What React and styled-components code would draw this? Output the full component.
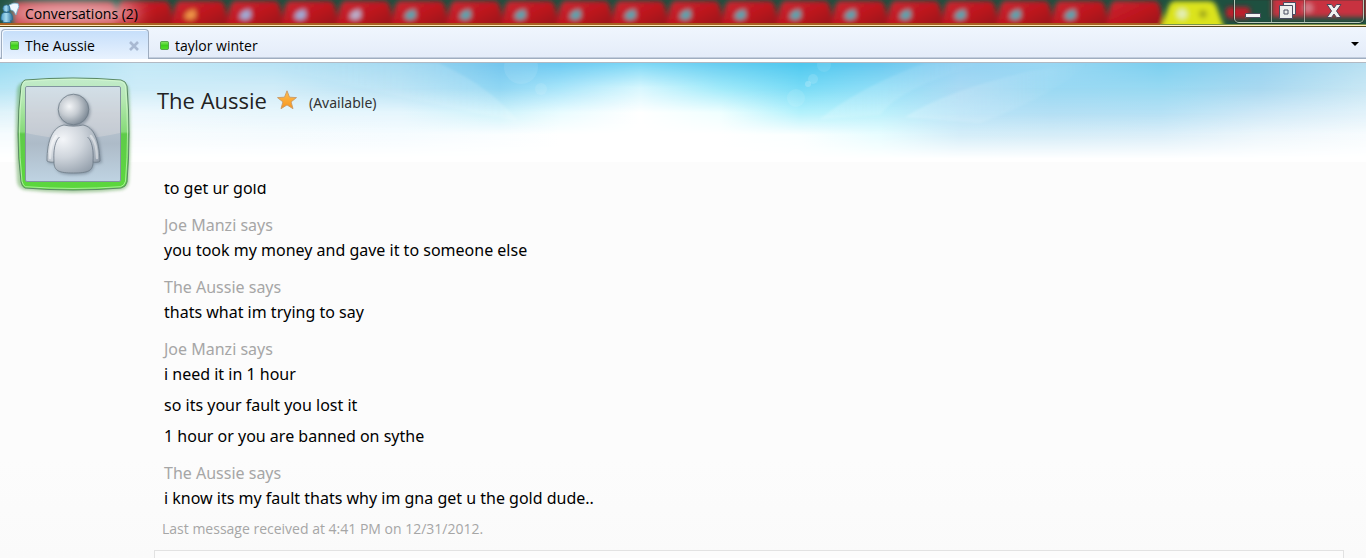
import { useState } from 'react';
import styled, { createGlobalStyle } from 'styled-components';

const tabs = ['The Aussie', 'taylor winter'];

const conversation = [
	{ messages: ['to get ur gold'] },
	{ author: 'Joe Manzi', messages: ['you took my money and gave it to someone else'] },
	{ author: 'The Aussie', messages: ['thats what im trying to say'] },
	{
		author: 'Joe Manzi',
		messages: ['i need it in 1 hour', 'so its your fault you lost it', '1 hour or you are banned on sythe'],
	},
	{ author: 'The Aussie', messages: ['i know its my fault thats why im gna get u the gold dude..'] },
];

export default function App() {
	const [active, setActive] = useState(tabs[0]);

	return (
		<Window>
			<GlobalStyle />
			<TitleBar>
				<GlassBackdrop />
				<MessengerIcon />
				<Title>Conversations (2)</Title>
				<WindowButtons>
					<WindowButton aria-label="Minimize" $width={36}>
						<MinimizeIcon />
					</WindowButton>
					<WindowButton aria-label="Restore" $width={33}>
						<RestoreIcon />
					</WindowButton>
					<WindowButton aria-label="Close" $width={59}>
						<CloseIcon />
					</WindowButton>
				</WindowButtons>
			</TitleBar>
			<TabStrip>
				{tabs.map((name) => (
					<Tab key={name} $active={name === active}>
						<TabButton onClick={() => setActive(name)}>
							<StatusDot />
							{name}
						</TabButton>
						{name === active && (
							<TabClose aria-label={`Close ${name}`}>
								<svg width="12" height="12" viewBox="0 0 12 12">
									<path d="M2 2l8 8M10 2l-8 8" stroke="#a9b9d2" strokeWidth="2.6" />
								</svg>
							</TabClose>
						)}
					</Tab>
				))}
				<TabMenu aria-label="More tabs">
					<svg width="8" height="4" viewBox="0 0 8 4">
						<path d="M0 0h8L4 4z" fill="#000" />
					</svg>
				</TabMenu>
			</TabStrip>
			<Conversation>
				<Sky />
				<Avatar />
				<Main>
					<Contact>
						<ContactName>The Aussie</ContactName>
						<StarIcon />
						<ContactStatus>(Available)</ContactStatus>
					</Contact>
					<Log>
						{conversation.map(({ author, messages }) => (
							<Group key={messages[0]}>
								{author && <Author>{author} says</Author>}
								{messages.map((text) => (
									<Message key={text}>{text}</Message>
								))}
							</Group>
						))}
					</Log>
					<LastReceived>Last message received at 4:41 PM on 12/31/2012.</LastReceived>
					<Composer aria-label="Message" />
				</Main>
			</Conversation>
		</Window>
	);
}

// blurred browser tabs showing through the glass title bar
function GlassBackdrop() {
	const reds = Array.from({ length: 18 }, (_, i) => 173 + i * 55);

	return (
		<Backdrop aria-hidden="true">
			<defs>
				<filter id="soft" x="-20%" y="-50%" width="140%" height="200%">
					<feGaussianBlur stdDeviation="2.4" />
				</filter>
				<filter id="softer" x="-20%" y="-100%" width="140%" height="300%">
					<feGaussianBlur stdDeviation="8" />
				</filter>
				<linearGradient id="red" x2="1" y2="1">
					<stop offset="0" stopColor="#cc2a34" />
					<stop offset="0.5" stopColor="#bd141e" />
					<stop offset="1" stopColor="#8c161c" />
				</linearGradient>
			</defs>
			<rect width="100%" height="26" fill="#1e5040" />
			<g filter="url(#soft)">
				<path d="M14 30V8q0-6 6-6H108q6 0 8 7l4 21z" fill="#c8303a" />
				<path d="M114 30l4-22q2-7 6-7h40q5 0 7 7l4 22z" fill="url(#red)" />
				{reds.map((x) => (
					<path key={x} d={`M${x - 2} 30l3-20q2-9 7-9h38q5 0 7 9l4 20z`} fill="url(#red)" />
				))}
				{reds.slice(0, 17).map((x, i) => (
					<path
						key={x}
						d={`M${x + 11} 18l3-6 8-3 1 8-5 3z`}
						fill={['#f09848', '#9db0dc', '#9db0dc', '#b9b3d0'][i] || '#4fa8b4'}
					/>
				))}
				<path d="M1160 30l8-22q2-7 7-7h34q6 0 8 7l8 22z" fill="#dbe31c" />
				<circle cx="1182" cy="14" r="5" fill="#e4efb8" />
				<circle cx="1203" cy="14" r="4" fill="#a3a91c" />
				<rect x="1226" y="7" width="24" height="11" rx="4" fill="#c01f2c" />
				<rect x="1272" y="-4" width="94" height="21" fill="#c8323f" />
				<circle cx="1308" cy="8" r="5" fill="#d27c88" />
			</g>
			<ellipse cx="74" cy="13" rx="68" ry="10" fill="#fff" opacity="0.65" filter="url(#softer)" />
			<rect width="1160" y="23" height="2" fill="#a96122" />
			<rect x="1160" width="100%" y="24" height="1" fill="#78954a" />
		</Backdrop>
	);
}

function MessengerIcon() {
	return (
		<svg width="20" height="24" viewBox="0 0 20 24" aria-hidden="true">
			<defs>
				<linearGradient id="buddy" x2="1" y2="0">
					<stop offset="0" stopColor="#4f9cc6" />
					<stop offset="0.45" stopColor="#a5dbef" />
					<stop offset="1" stopColor="#2b6f9c" />
				</linearGradient>
			</defs>
			<path
				d="M9 5q5-3 9-1.500 2 3-.5 6.500l-1.500 5-2.500-4q-3.500-1-4.500-3z"
				fill="#eef9ff"
				stroke="#74aeca"
				strokeWidth="0.8"
			/>
			<circle cx="6.5" cy="8.5" r="3.600" fill="url(#buddy)" stroke="#2c6d94" strokeWidth="0.7" />
			<path
				d="M1 20q-.5-6.500 3-7.500h5q4 1 3.500 7.500l-2 .5v2H3v-2z"
				fill="url(#buddy)"
				stroke="#2c6d94"
				strokeWidth="0.8"
			/>
		</svg>
	);
}

function MinimizeIcon() {
	return (
		<svg width="18" height="20" viewBox="0 0 18 20">
			<rect x="1.5" y="12.5" width="15" height="4" rx="0.5" fill="#f2f2f2" stroke="#4a4c5c" />
		</svg>
	);
}

function RestoreIcon() {
	return (
		<svg width="18" height="18" viewBox="0 0 18 18">
			<g fillRule="evenodd" stroke="#4a4c60">
				<path d="M4.500 .5h12v12h-12z" fill="#eee" />
				<path d="M.5 3.500h13v13H.5zM5 8v4h4V8z" fill="#eee" />
			</g>
		</svg>
	);
}

function CloseIcon() {
	return (
		<svg width="16" height="16" viewBox="0 0 16 16">
			<path
				d="M1 1.500h4.500L8 5l2.500-3.500H15L10.500 8l4.500 6.500h-4.500L8 11l-2.500 3.500H1L5.500 8z"
				fill="#f0f0f0"
				stroke="#4c4658"
			/>
		</svg>
	);
}

function StatusDot() {
	return (
		<svg width="9" height="9" viewBox="0 0 10 10" aria-hidden="true">
			<defs>
				<linearGradient id="dot" x2="0" y2="1">
					<stop offset="0" stopColor="#8be868" />
					<stop offset="0.5" stopColor="#3ccf1c" />
					<stop offset="1" stopColor="#55e02c" />
				</linearGradient>
			</defs>
			<rect x="0.5" y="0.5" width="9" height="9" rx="1.5" fill="url(#dot)" stroke="#4b9a42" />
		</svg>
	);
}

function StarIcon() {
	return (
		<svg width="22" height="22" viewBox="0 0 22 22" aria-hidden="true">
			<defs>
				<linearGradient id="star" x2="0" y2="1">
					<stop offset="0" stopColor="#ffc04f" />
					<stop offset="1" stopColor="#f7941e" />
				</linearGradient>
			</defs>
			<path
				d="M10 1.800l2.500 6.400 7 .4-5.400 4.300 1.900 6.800L10 15.900l-6 3.800 1.900-6.800L.5 8.600l7-.4z"
				fill="url(#star)"
				stroke="#c89a68"
				strokeWidth="0.9"
				strokeLinejoin="round"
			/>
		</svg>
	);
}

function Avatar() {
	return (
		<AvatarSvg width="126" height="128" viewBox="0 0 126 128" role="img" aria-label="The Aussie">
			<defs>
				<linearGradient id="frame" x2="0" y2="1">
					<stop offset="0" stopColor="#c3ebcc" />
					<stop offset="0.2" stopColor="#b4e8b0" />
					<stop offset="0.48" stopColor="#86da78" />
					<stop offset="0.5" stopColor="#5fcb4a" />
					<stop offset="1" stopColor="#5bd83c" />
				</linearGradient>
				<linearGradient id="pane" x2="0" y2="1">
					<stop offset="0" stopColor="#c8deea" />
					<stop offset="0.3" stopColor="#bfcad4" />
					<stop offset="0.6" stopColor="#adbbc8" />
					<stop offset="1" stopColor="#bfd3e2" />
				</linearGradient>
				<radialGradient id="head" cx="0.36" cy="0.4" r="0.7">
					<stop offset="0" stopColor="#f3f5f7" />
					<stop offset="0.45" stopColor="#c6ccd2" />
					<stop offset="1" stopColor="#75828f" />
				</radialGradient>
				<radialGradient id="body" cx="0.3" cy="0.3" r="0.85">
					<stop offset="0" stopColor="#f4f6f9" />
					<stop offset="0.45" stopColor="#cfd5dc" />
					<stop offset="1" stopColor="#8d99a6" />
				</radialGradient>
				<filter id="shade" x="-20%" y="-20%" width="140%" height="140%">
					<feGaussianBlur stdDeviation="1.8" />
				</filter>
			</defs>
			<path
				d="M14 12q49-6 98 0 6 1 7 8 3 43 0 92-1 6-7 8-49 6-98 0-6-2-7-8-3-49 0-92 1-7 7-8z"
				fill="#4e9a40"
				opacity="0.45"
				filter="url(#shade)"
			/>
			<path
				d="M15 10q48-4 96 0 5 1 6 6 4 48 0 96-1 5-6 6-48 4-96 0-3-1-4-6-6-48 0-96 1-5 4-6z"
				fill="url(#frame)"
				stroke="#5b8a66"
			/>
			<path
				d="M15.500 11.200q48-4 95 0 4 1 5 5 4 48 0 95-1 4.500-5 5.500-47.500 3.500-95 0-2.500-1-3.500-5.500-5-47 0-95 1-4 3.500-5z"
				fill="none"
				stroke="#dcffd2"
				opacity="0.6"
			/>
			<rect x="15.500" y="16.500" width="95" height="95" rx="1.500" fill="url(#pane)" stroke="#8295a0" />
			<path d="M16 17h94v46q-47 11-94 0z" fill="#e8e4e4" opacity="0.32" />
			<g fill="#5d6c7c" opacity="0.5" filter="url(#shade)">
				<circle cx="64.500" cy="41" r="16" />
				<path d="M54 56c-12 2-17 16-16 37l7 1c1 9 6 11 20 11s19-3 19-11l8-1c-1-21-5-35-17-37z" />
			</g>
			<path
				d="M54 55c-11 2-17 15-17 36 1 1 5 1.500 7 1 0 9 5 11 19.500 11S83 101 83 92c2 .5 6 .5 7-1-1-21-6-34-17-36-6 1.500-13 1.500-19 0z"
				fill="url(#body)"
				stroke="#6f7c88"
				strokeWidth="0.8"
			/>
			<path
				d="M44 92c-.5-9 0-15 2.500-21 1-2 2-3 3-4M83 92c.5-9 0-15-2.500-21-1-2-2-3-3-4"
				fill="none"
				stroke="#6a7785"
				opacity="0.8"
			/>
			<path
				d="M40 88c0-9 2-17 6-22M87 88c0-9-2-17-6-22"
				fill="none"
				stroke="#fff"
				strokeWidth="2.400"
				strokeLinecap="round"
				opacity="0.45"
			/>
			<circle cx="63.500" cy="39.500" r="15.300" fill="url(#head)" stroke="#6f7c88" strokeWidth="0.8" />
		</AvatarSvg>
	);
}

// sky colours at a few heights, each blended into the next one down
const skyStops = [0, 137, 273, 400, 500, 560, 640, 720, 800, 880, 960, 1050, 1160, 1260, 1366];
const skyRows = [
	{
		y: 0,
		colors: '9adcf2 c5e9f7 b8e3f5 9fd8f1 74c6ee 6ccaf2 7dd8f6 66cdf1 4ec8ef 68c8ef 93d2f3 9ad8f4 7ccfef 97d3f0 b8e0f2',
	},
	{
		y: 25,
		colors: 'b5e5f5 cdecf8 d0ecf8 b5e1f4 8fd6f3 a8e5fa d8f7fe a0eafa 78dbf6 90def7 a9daf3 9ad9f3 97d9f2 a8d8f0 c8e7f4',
	},
	{
		y: 50,
		colors: 'e0f3fa eef8fd e8f6fc e6f6fd d0f3fb eafcff ffffff f0ffff b5f2fc bdf1fb b8e3f7 b3dff4 b6e1f5 cfe9f7 e2f2fa',
	},
	{
		y: 72,
		colors: 'f6fcfe f8fcfe f5fbfe f6fcff fbfeff ffffff ffffff ffffff fbffff e8fdff d5eef9 d6edf8 dceff9 eef7fc f8fcfe',
	},
	{
		y: 96,
		colors: 'ffffff ffffff ffffff ffffff ffffff ffffff ffffff ffffff ffffff ffffff ffffff ffffff ffffff ffffff ffffff',
	},
];

function Sky() {
	return (
		<SkySvg viewBox="0 0 1366 99" preserveAspectRatio="none" aria-hidden="true">
			<defs>
				{skyRows.map(({ y, colors }, i) => (
					<linearGradient key={y} id={`sky${i}`}>
						{colors.split(' ').map((color, n) => (
							<stop key={skyStops[n]} offset={skyStops[n] / 1366} stopColor={`#${color}`} />
						))}
					</linearGradient>
				))}
				{skyRows.slice(1).map(({ y }, i) => (
					<linearGradient key={y} id={`rise${i + 1}`} gradientUnits="userSpaceOnUse" x1="0" x2="0" y1={skyRows[i].y} y2={y}>
						<stop offset="0" stopColor="#fff" stopOpacity="0" />
						<stop offset="1" stopColor="#fff" />
					</linearGradient>
				))}
				{skyRows.slice(1).map(({ y }, i) => (
					<mask key={y} id={`blend${i + 1}`} maskUnits="userSpaceOnUse" x="0" y="0" width="1366" height="99">
						<rect width="1366" height="99" fill={`url(#rise${i + 1})`} />
					</mask>
				))}
				<filter id="haze" x="-10%" y="-10%" width="120%" height="120%">
					<feGaussianBlur stdDeviation="1" />
				</filter>
				<linearGradient id="ray" x2="1" y2="0">
					<stop offset="0" stopColor="#fff" stopOpacity="0.2" />
					<stop offset="1" stopColor="#fff" stopOpacity="0" />
				</linearGradient>
				<linearGradient id="rayLeft">
					<stop offset="0" stopColor="#fff" stopOpacity="0" />
					<stop offset="1" stopColor="#fff" stopOpacity="0.16" />
				</linearGradient>
			</defs>
			{skyRows.map(({ y }, i) => (
				<rect key={y} width="1366" height="99" fill={`url(#sky${i})`} mask={i ? `url(#blend${i})` : undefined} />
			))}
			<g filter="url(#haze)">
				<path d="M438 0q50 22 80 58Q420 40 260 0z" fill="url(#rayLeft)" />
				<path d="M905 54Q945 28 1030 8l60-8q-40 34-110 60z" fill="url(#ray)" />
				<path d="M820 56Q860 24 925 0h60Q900 24 880 52z" fill="url(#ray)" />
			</g>
			<g fill="#fff">
				<circle cx="521" cy="4" r="17" opacity="0.09" />
				<circle cx="541" cy="26" r="6" opacity="0.1" />
				<circle cx="796" cy="35" r="9" opacity="0.1" />
				<circle cx="813" cy="16" r="5" opacity="0.13" />
				<circle cx="808" cy="21" r="3" opacity="0.2" />
				<circle cx="824" cy="2" r="7" opacity="0.09" />
			</g>
		</SkySvg>
	);
}

const GlobalStyle = createGlobalStyle`
	body {
		margin: 0;
		background: #fcfcfc;
		color: #000;
		font-family: 'Open Sans', 'Noto Sans', sans-serif;
		font-size: 14px;
	}
	* {
		box-sizing: border-box;
	}
	button {
		border: 0;
		padding: 0;
		background: none;
		color: inherit;
		font: inherit;
	}
	svg {
		display: block;
		flex: none;
	}
`;

const Window = styled.div`
	display: flex;
	flex-direction: column;
	height: 100vh;
	overflow: hidden;
`;

const TitleBar = styled.header`
	position: relative;
	display: flex;
	align-items: center;
	gap: 5px;
	flex: none;
	height: 27px;
	padding-bottom: 2px;
	border-bottom: 1px solid #564618;
	background: #ffe9b8;
	overflow: hidden;

	& > * {
		position: relative;
	}
`;

const Backdrop = styled.svg`
	&& {
		position: absolute;
	}
	top: 0;
	left: 0;
	width: 100%;
	height: 25px;
`;

const Title = styled.h1`
	margin: 0;
	padding-top: 4px;
	font-size: 14px;
	font-weight: 400;
	line-height: 20px;
`;

const WindowButtons = styled.div`
	display: flex;
	align-self: flex-start;
	height: 23px;
	margin-left: auto;
	margin-right: 2px;
	border: 1px solid #b9cabb;
	border-top: 0;
	border-radius: 0 0 5px 5px;
	box-shadow: 0 0 0 1px rgba(30, 45, 35, 0.55);
`;

const WindowButton = styled.button`
	display: flex;
	align-items: center;
	justify-content: center;
	width: ${({ $width }) => $width}px;
	box-shadow: inset 0 0 0 1px rgba(40, 50, 45, 0.25);

	& + & {
		border-left: 1px solid rgba(215, 220, 210, 0.6);
	}
`;

const TabStrip = styled.nav`
	display: flex;
	align-items: flex-end;
	gap: 2px;
	flex: none;
	height: 36px;
	padding: 2px 7px 3px 1px;
	border-bottom: 1px solid #b3b9c2;
	background: linear-gradient(#f0f6fe, #e4ecf9 30px, #9fadc0 31px, #9fadc0 32px, #fff 32px);
`;

const Tab = styled.div`
	display: flex;
	align-items: center;
	justify-content: space-between;
	min-width: 148px;
	height: 30px;
	padding: 2px 8px 0;
	border: 1px solid transparent;
	border-bottom: 0;
	border-radius: 4px 4px 0 0;
	${({ $active }) =>
		$active && 'border-color: #9fadc0; background: linear-gradient(#c5defa, #e8f2fe); box-shadow: inset 1px 1px #f3f9ff;'}
`;

const TabButton = styled.button`
	display: flex;
	align-items: center;
	gap: 6px;
	line-height: 20px;
`;

const TabClose = styled.button`
	display: flex;
`;

const TabMenu = styled.button`
	align-self: center;
	margin-left: auto;
`;

const Conversation = styled.main`
	position: relative;
	display: flex;
	flex: 1;
	min-height: 0;
	gap: 18px;
	padding: 0 22px 0 10px;
	background: linear-gradient(#fcfcfc 80%, #fafafa);
`;

const SkySvg = styled.svg`
	position: absolute;
	top: 0;
	left: 0;
	width: 100%;
	height: 99px;
`;

const AvatarSvg = styled.svg`
	position: relative;
	margin-top: 7px;
`;

const Main = styled.section`
	position: relative;
	display: flex;
	flex-direction: column;
	flex: 1;
	min-width: 0;
`;

const Contact = styled.div`
	display: flex;
	align-items: center;
	flex: none;
	gap: 10px;
	height: 121px;
	padding: 0 3px 48px;
`;

const ContactName = styled.h2`
	margin: 0;
	color: #222;
	font-size: 22px;
	font-weight: 400;
	line-height: 30px;
`;

const ContactStatus = styled.span`
	padding-top: 6px;
	color: #333;
	font-family: 'Noto Sans', sans-serif;
	line-height: 20px;
`;

const Log = styled.div`
	display: flex;
	flex-direction: column;
	justify-content: flex-end;
	flex: 1;
	min-height: 0;
	padding-left: 10px;
	overflow: hidden;
	font-family: 'Noto Sans', sans-serif;
	font-size: 16px;
	line-height: 25px;
`;

const Group = styled.article`
	flex: none;
	padding-bottom: 6px;
`;

const Author = styled.div`
	color: #a6a6a6;
`;

const Message = styled.p`
	margin: 0 0 6px;

	${Group}:last-child &:last-child {
		margin: 0;
	}
`;

const LastReceived = styled.div`
	flex: none;
	padding: 2px 8px 11px;
	color: #a6a6a6;
	line-height: 20px;
`;

const Composer = styled.textarea`
	flex: none;
	height: 8px;
	border: 1px solid #e2e2e2;
	border-bottom: 0;
	background: #fcfcfc;
	resize: none;
	overflow: hidden;
`;
